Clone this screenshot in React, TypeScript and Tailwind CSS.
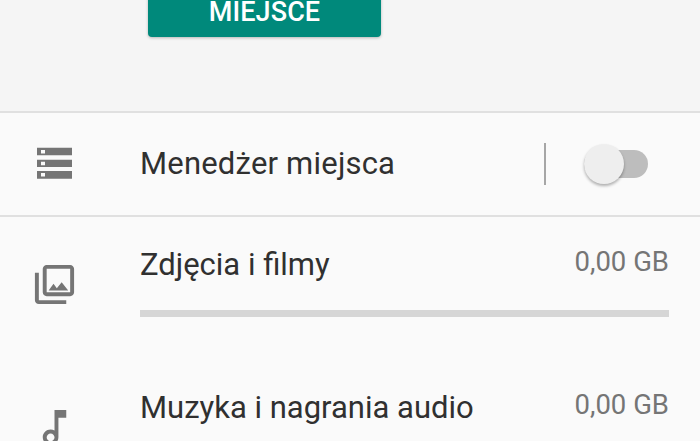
export default function App() {
  const Row = ({ title, size, icon, bar }: { title: string; size: string; icon: React.ReactNode; bar?: boolean }) => (
    <div className="flex h-[143px] shrink-0">
      <div className="w-[140px] shrink-0 pl-[31px] pt-[15px]">{icon}</div>
      <div className="w-[529px] shrink-0 flex flex-col">
        <div className="flex justify-between h-[64px]">
          <span className="text-[31px] leading-[36px] text-[#303030] pt-[1px]">{title}</span>
          <span className="text-[27.5px] leading-[30px] text-[#757575] pt-[1px]">{size}</span>
        </div>
        {bar && <div className="h-[7px] bg-[#d6d6d6]" />}
      </div>
    </div>
  );
  return (
    <div className="w-[700px] h-[441px] overflow-hidden bg-[#fafafa] flex flex-col" style={{ fontFamily: 'Roboto, sans-serif' }}>
      <div className="h-[111px] shrink-0 bg-[#f5f5f5] flex items-end pb-[74px] pl-[148px]">
        <div className="w-[233px] h-[60px] shrink-0 bg-[#00897b] rounded-[4px] shadow-[0_1px_3px_rgba(0,0,0,0.25)] flex items-end justify-center pb-[10px]">
          <span className="text-[27px] leading-[30px] font-medium text-white tracking-[0.1px]">MIEJSCE</span>
        </div>
      </div>
      <div className="h-[106px] shrink-0 border-y-2 border-[#e0e0e0] flex items-center pl-[37px] pr-[52px]">
        <svg width="35" height="32" viewBox="0 0 35 32" className="shrink-0 mb-[3px]" fill="#757575">
          <path fillRule="evenodd" d="M0 .7h35v7.6H0zM4 3v3.5h4V3zM0 12.7h35V20H0zM4 14.7v3.5h4v-3.5zM0 24h35v7.7H0zM4 26v3.6h4V26z" />
        </svg>
        <span className="ml-[68px] text-[31px] tracking-[0.2px] text-[#303030] leading-[36px]">Menedżer miejsca</span>
        <div className="ml-auto w-[2px] h-[42px] bg-[#a6a6a6]" />
        <div className="relative ml-[38px] w-[64px] h-[28px] rounded-full bg-[#bdbdbd]">
          <div className="absolute left-0 top-[-6px] w-[40px] h-[40px] rounded-full bg-[#eeeeee] shadow-[0_2px_3px_rgba(0,0,0,0.3)]" />
        </div>
      </div>
      <div className="pt-[29px]">
        <Row
          title="Zdjęcia i filmy"
          size="0,00 GB"
          bar
          icon={
            <svg width="47" height="47" viewBox="0 0 24 24" fill="#757575">
              <path d="M20 4v12H8V4h12m0-2H8c-1.1 0-2 .9-2 2v12c0 1.1.9 2 2 2h12c1.1 0 2-.9 2-2V4c0-1.1-.9-2-2-2zm-8.5 9.67l1.69 2.26 2.48-3.1L19 15H9zM2 6v14c0 1.1.9 2 2 2h14v-2H4V6H2z" />
            </svg>
          }
        />
        <Row
          title="Muzyka i nagrania audio"
          size="0,00 GB"
          icon={
            <svg width="47" height="47" viewBox="0 0 24 24" fill="#757575">
              <path d="M12 3l.01 10.55c-.59-.34-1.27-.55-2.01-.55C7.79 13 6 14.79 6 17s1.79 4 4 4 4-1.79 4-4V7h4V3h-6zm-1.99 16c-1.1 0-2-.9-2-2s.9-2 2-2 2 .9 2 2-.9 2-2 2z" />
            </svg>
          }
        />
      </div>
    </div>
  );
}
